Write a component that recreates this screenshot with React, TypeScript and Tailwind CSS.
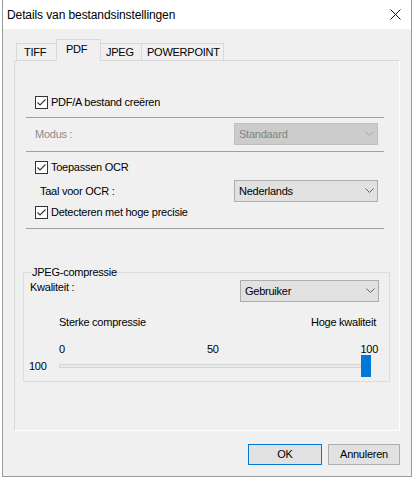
import React from 'react';

const Check: React.FC = () => (
  <span className="flex h-[13px] w-[13px] shrink-0 items-center justify-center border border-[#333333] bg-white">
    <svg width="11" height="11" viewBox="0 0 11 11">
      <polyline points="1.5,5.5 4,8 9.5,2.5" fill="none" stroke="#333333" strokeWidth="1.1" />
    </svg>
  </span>
);

const Chevron: React.FC<{ color: string }> = ({ color }) => (
  <svg width="9" height="6" viewBox="0 0 9 6">
    <polyline points="0.5,0.5 4.5,4.5 8.5,0.5" fill="none" stroke={color} strokeWidth="1" />
  </svg>
);

interface SelectProps {
  value: string;
  disabled?: boolean;
  width: string;
}

const Select: React.FC<SelectProps> = ({ value, disabled, width }) => (
  <div
    className={`flex h-[22px] items-center justify-between border pl-[4px] pr-[3px] ${width} ${
      disabled ? 'border-[#bfbfbf] bg-[#cccccc] text-[#838383]' : 'border-[#adadad] bg-[#e1e1e1] text-black'
    }`}
  >
    <span>{value}</span>
    <Chevron color={disabled ? '#a6a6a6' : '#606060'} />
  </div>
);

const CheckRow: React.FC<{ label: string; className?: string }> = ({ label, className }) => (
  <div className={`flex h-[13px] items-center gap-[3px] pl-[9px] ${className ?? ''}`}>
    <Check />
    <span className="leading-[13px]">{label}</span>
  </div>
);

const Separator: React.FC<{ className?: string }> = ({ className }) => (
  <div className={`h-px bg-[#a0a0a0] ${className ?? ''}`} />
);

export default function App() {
  return (
    <div className="h-[481px] w-[415px] bg-white font-['Liberation_Sans',Arial,sans-serif] text-[11px] tracking-[-0.25px] text-black">
      <div className="ml-[2px] flex h-[477px] w-[410px] flex-col border-x border-b border-[#9a9a9a] bg-[#f0f0f0]">
        {/* Title bar */}
        <div className="flex h-[29px] items-center justify-between bg-white pl-[4px] pr-[10px]">
          <span className="text-[12px] tracking-[-0.1px]">Details van bestandsinstellingen</span>
          <svg width="11" height="11" viewBox="0 0 11 11">
            <path d="M0.5 0.5 L10.5 10.5 M10.5 0.5 L0.5 10.5" stroke="#111" strokeWidth="1" />
          </svg>
        </div>

        <div className="flex flex-1 flex-col pt-[10px]">
          {/* Tabs */}
          <div className="ml-[11px] flex h-[21px] items-end pl-[2px]">
            <div className="flex h-[17px] w-[41px] items-center border-x border-t border-[#d9d9d9] pl-[7px]">TIFF</div>
            <div className="relative z-10 -mb-px -ml-px flex h-[22px] w-[45px] items-center border-x border-t border-[#d9d9d9] bg-[#f0f0f0] pb-[2px] pl-[9px]">
              PDF
            </div>
            <div className="-ml-px flex h-[17px] w-[42px] items-center border-x border-t border-[#d9d9d9] pl-[5px]">JPEG</div>
            <div className="-ml-px flex h-[17px] w-[83px] items-center border-x border-t border-[#d9d9d9] pl-[5px]">POWERPOINT</div>
          </div>

          {/* Tab page */}
          <div className="ml-[11px] flex h-[371px] w-[386px] flex-col border-l border-t border-r border-b border-[#d9d9d9] border-r-white border-b-white">
            <div className="flex flex-col pl-[11px] pr-[15px]">
              <CheckRow label="PDF/A bestand creëren" className="mt-[35px]" />
              <Separator className="mt-[8px]" />
              <div className="mt-[5px] flex items-center justify-between pl-[9px] pr-[6px]">
                <span className="text-[#8d8d8d]">Modus :</span>
                <Select value="Standaard" disabled width="w-[144px]" />
              </div>
              <Separator className="mt-[6px]" />
              <CheckRow label="Toepassen OCR" className="mt-[9px]" />
              <div className="mt-[6px] flex items-center justify-between pl-[14px] pr-[6px]">
                <span>Taal voor OCR :</span>
                <Select value="Nederlands" width="w-[144px]" />
              </div>
              <CheckRow label="Detecteren met hoge precisie" className="mt-[4px]" />
              <Separator className="mt-[9px]" />
            </div>

            {/* JPEG group box */}
            <div className="relative ml-[8px] mr-[9px] mt-[43px] flex flex-col border border-[#dcdcdc] pb-[4px]">
              <span className="absolute -top-[8px] left-[8px] bg-[#f0f0f0] leading-[14px]">JPEG-compressie</span>
              <div className="mt-[7px] flex items-start justify-between pl-[6px] pr-[10px]">
                <span className="leading-[14px]">Kwaliteit :</span>
                <Select value="Gebruiker" width="w-[139px]" />
              </div>
              <div className="mt-[13px] flex h-[14px] items-center justify-between pl-[35px] pr-[13px]">
                <span>Sterke compressie</span>
                <span>Hoge kwaliteit</span>
              </div>
              <div className="mt-[14px] flex h-[12px] items-center pl-[35px] pr-[11px]">
                <span className="w-[148px]">0</span>
                <span className="flex-1">50</span>
                <span>100</span>
              </div>
              <div className="flex h-[22px] items-center pl-[5px]">
                <span className="w-[30px]">100</span>
                <div className="relative flex h-[22px] w-[312px] items-center">
                  <div className="h-[4px] w-full border border-[#d6d6d6] bg-[#e7eaea]" />
                  <div className="absolute right-0 top-0 h-[22px] w-[10px] bg-[#0078d7]" />
                </div>
              </div>
            </div>
          </div>

          {/* Buttons */}
          <div className="mt-[13px] flex justify-end gap-[6px] pr-[11px]">
            <button className="flex h-[21px] w-[74px] items-center justify-center border border-[#0078d7] bg-[#e1e1e1]">
              OK
            </button>
            <button className="flex h-[21px] w-[72px] items-center justify-center border border-[#adadad] bg-[#e1e1e1]">
              Annuleren
            </button>
          </div>
        </div>
      </div>
    </div>
  );
}
